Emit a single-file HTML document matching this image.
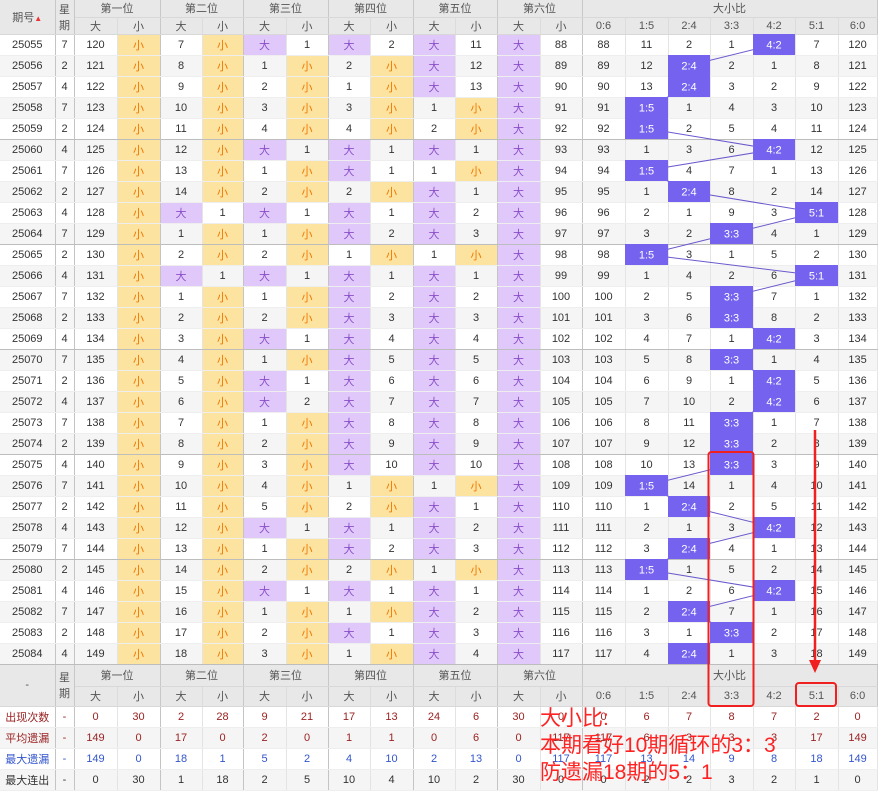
<!DOCTYPE html>
<html><head><meta charset="utf-8"><style>
*{margin:0;padding:0;box-sizing:border-box}
body{width:880px;height:792px;background:#fff;font-family:"Liberation Sans","Noto Sans CJK SC",sans-serif;font-size:11px;color:#333;position:relative;overflow:hidden}
table{border-collapse:collapse;table-layout:fixed;width:877px;position:absolute;left:0;top:0}
td{text-align:center;height:21px;border-right:1px solid #e4e4e4;border-bottom:1px solid #eee;padding:0;white-space:nowrap;overflow:hidden}
tr.d:nth-child(even) td{background:#f5f5f5}
tr.d td:nth-child(1),tr.d td:nth-child(2),tr.d td:nth-child(4),tr.d td:nth-child(6),tr.d td:nth-child(8),tr.d td:nth-child(10),tr.d td:nth-child(12),tr.d td:nth-child(14){border-right:1px solid #c4c4c4}
tr.g td{border-bottom:1px solid #bdbdbd}
th{background:#e8e8e8;font-weight:normal;color:#555;border-right:1px solid #c8c8c8;border-bottom:1px solid #d8d8d8;font-size:11px}
th.s{border-right:1px solid #dcdcdc}
tr.d td.o{background:#fde3a0 !important;color:#f07800}
tr.d td.p{background:#e0c8fb !important;color:#8a4fc8}
tr.d td.h{background:#7563f0 !important;color:#fff}
.r1 td{color:#9b2222}.r2 td{color:#9b2222}.r3 td{color:#3355cc}.r4 td{color:#333}
</style></head><body>
<table>
<colgroup><col style="width:55px"><col style="width:19px"><col style="width:43px"><col style="width:43px"><col style="width:42px"><col style="width:41px"><col style="width:43px"><col style="width:42px"><col style="width:42px"><col style="width:43px"><col style="width:42px"><col style="width:42px"><col style="width:43px"><col style="width:42px"><col style="width:43px"><col style="width:43px"><col style="width:42px"><col style="width:43px"><col style="width:42px"><col style="width:43px"><col style="width:39px"></colgroup>
<tr style="height:17px"><th rowspan="2">期号<span style="color:#e33;font-size:8px">▲</span></th><th rowspan="2">星<br>期</th><th colspan="2">第一位</th><th colspan="2">第二位</th><th colspan="2">第三位</th><th colspan="2">第四位</th><th colspan="2">第五位</th><th colspan="2">第六位</th><th colspan="7">大小比</th></tr>
<tr style="height:17px"><th class="s">大</th><th>小</th><th class="s">大</th><th>小</th><th class="s">大</th><th>小</th><th class="s">大</th><th>小</th><th class="s">大</th><th>小</th><th class="s">大</th><th>小</th><th class="s">0:6</th><th class="s">1:5</th><th class="s">2:4</th><th class="s">3:3</th><th class="s">4:2</th><th class="s">5:1</th><th>6:0</th></tr>
<tr class="d"><td>25055</td><td>7</td><td>120</td><td class="o">小</td><td>7</td><td class="o">小</td><td class="p">大</td><td>1</td><td class="p">大</td><td>2</td><td class="p">大</td><td>11</td><td class="p">大</td><td>88</td><td>88</td><td>11</td><td>2</td><td>1</td><td class="h">4:2</td><td>7</td><td>120</td></tr>
<tr class="d"><td>25056</td><td>2</td><td>121</td><td class="o">小</td><td>8</td><td class="o">小</td><td>1</td><td class="o">小</td><td>2</td><td class="o">小</td><td class="p">大</td><td>12</td><td class="p">大</td><td>89</td><td>89</td><td>12</td><td class="h">2:4</td><td>2</td><td>1</td><td>8</td><td>121</td></tr>
<tr class="d"><td>25057</td><td>4</td><td>122</td><td class="o">小</td><td>9</td><td class="o">小</td><td>2</td><td class="o">小</td><td>1</td><td class="o">小</td><td class="p">大</td><td>13</td><td class="p">大</td><td>90</td><td>90</td><td>13</td><td class="h">2:4</td><td>3</td><td>2</td><td>9</td><td>122</td></tr>
<tr class="d"><td>25058</td><td>7</td><td>123</td><td class="o">小</td><td>10</td><td class="o">小</td><td>3</td><td class="o">小</td><td>3</td><td class="o">小</td><td>1</td><td class="o">小</td><td class="p">大</td><td>91</td><td>91</td><td class="h">1:5</td><td>1</td><td>4</td><td>3</td><td>10</td><td>123</td></tr>
<tr class="d g"><td>25059</td><td>2</td><td>124</td><td class="o">小</td><td>11</td><td class="o">小</td><td>4</td><td class="o">小</td><td>4</td><td class="o">小</td><td>2</td><td class="o">小</td><td class="p">大</td><td>92</td><td>92</td><td class="h">1:5</td><td>2</td><td>5</td><td>4</td><td>11</td><td>124</td></tr>
<tr class="d"><td>25060</td><td>4</td><td>125</td><td class="o">小</td><td>12</td><td class="o">小</td><td class="p">大</td><td>1</td><td class="p">大</td><td>1</td><td class="p">大</td><td>1</td><td class="p">大</td><td>93</td><td>93</td><td>1</td><td>3</td><td>6</td><td class="h">4:2</td><td>12</td><td>125</td></tr>
<tr class="d"><td>25061</td><td>7</td><td>126</td><td class="o">小</td><td>13</td><td class="o">小</td><td>1</td><td class="o">小</td><td class="p">大</td><td>1</td><td>1</td><td class="o">小</td><td class="p">大</td><td>94</td><td>94</td><td class="h">1:5</td><td>4</td><td>7</td><td>1</td><td>13</td><td>126</td></tr>
<tr class="d"><td>25062</td><td>2</td><td>127</td><td class="o">小</td><td>14</td><td class="o">小</td><td>2</td><td class="o">小</td><td>2</td><td class="o">小</td><td class="p">大</td><td>1</td><td class="p">大</td><td>95</td><td>95</td><td>1</td><td class="h">2:4</td><td>8</td><td>2</td><td>14</td><td>127</td></tr>
<tr class="d"><td>25063</td><td>4</td><td>128</td><td class="o">小</td><td class="p">大</td><td>1</td><td class="p">大</td><td>1</td><td class="p">大</td><td>1</td><td class="p">大</td><td>2</td><td class="p">大</td><td>96</td><td>96</td><td>2</td><td>1</td><td>9</td><td>3</td><td class="h">5:1</td><td>128</td></tr>
<tr class="d g"><td>25064</td><td>7</td><td>129</td><td class="o">小</td><td>1</td><td class="o">小</td><td>1</td><td class="o">小</td><td class="p">大</td><td>2</td><td class="p">大</td><td>3</td><td class="p">大</td><td>97</td><td>97</td><td>3</td><td>2</td><td class="h">3:3</td><td>4</td><td>1</td><td>129</td></tr>
<tr class="d"><td>25065</td><td>2</td><td>130</td><td class="o">小</td><td>2</td><td class="o">小</td><td>2</td><td class="o">小</td><td>1</td><td class="o">小</td><td>1</td><td class="o">小</td><td class="p">大</td><td>98</td><td>98</td><td class="h">1:5</td><td>3</td><td>1</td><td>5</td><td>2</td><td>130</td></tr>
<tr class="d"><td>25066</td><td>4</td><td>131</td><td class="o">小</td><td class="p">大</td><td>1</td><td class="p">大</td><td>1</td><td class="p">大</td><td>1</td><td class="p">大</td><td>1</td><td class="p">大</td><td>99</td><td>99</td><td>1</td><td>4</td><td>2</td><td>6</td><td class="h">5:1</td><td>131</td></tr>
<tr class="d"><td>25067</td><td>7</td><td>132</td><td class="o">小</td><td>1</td><td class="o">小</td><td>1</td><td class="o">小</td><td class="p">大</td><td>2</td><td class="p">大</td><td>2</td><td class="p">大</td><td>100</td><td>100</td><td>2</td><td>5</td><td class="h">3:3</td><td>7</td><td>1</td><td>132</td></tr>
<tr class="d"><td>25068</td><td>2</td><td>133</td><td class="o">小</td><td>2</td><td class="o">小</td><td>2</td><td class="o">小</td><td class="p">大</td><td>3</td><td class="p">大</td><td>3</td><td class="p">大</td><td>101</td><td>101</td><td>3</td><td>6</td><td class="h">3:3</td><td>8</td><td>2</td><td>133</td></tr>
<tr class="d g"><td>25069</td><td>4</td><td>134</td><td class="o">小</td><td>3</td><td class="o">小</td><td class="p">大</td><td>1</td><td class="p">大</td><td>4</td><td class="p">大</td><td>4</td><td class="p">大</td><td>102</td><td>102</td><td>4</td><td>7</td><td>1</td><td class="h">4:2</td><td>3</td><td>134</td></tr>
<tr class="d"><td>25070</td><td>7</td><td>135</td><td class="o">小</td><td>4</td><td class="o">小</td><td>1</td><td class="o">小</td><td class="p">大</td><td>5</td><td class="p">大</td><td>5</td><td class="p">大</td><td>103</td><td>103</td><td>5</td><td>8</td><td class="h">3:3</td><td>1</td><td>4</td><td>135</td></tr>
<tr class="d"><td>25071</td><td>2</td><td>136</td><td class="o">小</td><td>5</td><td class="o">小</td><td class="p">大</td><td>1</td><td class="p">大</td><td>6</td><td class="p">大</td><td>6</td><td class="p">大</td><td>104</td><td>104</td><td>6</td><td>9</td><td>1</td><td class="h">4:2</td><td>5</td><td>136</td></tr>
<tr class="d"><td>25072</td><td>4</td><td>137</td><td class="o">小</td><td>6</td><td class="o">小</td><td class="p">大</td><td>2</td><td class="p">大</td><td>7</td><td class="p">大</td><td>7</td><td class="p">大</td><td>105</td><td>105</td><td>7</td><td>10</td><td>2</td><td class="h">4:2</td><td>6</td><td>137</td></tr>
<tr class="d"><td>25073</td><td>7</td><td>138</td><td class="o">小</td><td>7</td><td class="o">小</td><td>1</td><td class="o">小</td><td class="p">大</td><td>8</td><td class="p">大</td><td>8</td><td class="p">大</td><td>106</td><td>106</td><td>8</td><td>11</td><td class="h">3:3</td><td>1</td><td>7</td><td>138</td></tr>
<tr class="d g"><td>25074</td><td>2</td><td>139</td><td class="o">小</td><td>8</td><td class="o">小</td><td>2</td><td class="o">小</td><td class="p">大</td><td>9</td><td class="p">大</td><td>9</td><td class="p">大</td><td>107</td><td>107</td><td>9</td><td>12</td><td class="h">3:3</td><td>2</td><td>8</td><td>139</td></tr>
<tr class="d"><td>25075</td><td>4</td><td>140</td><td class="o">小</td><td>9</td><td class="o">小</td><td>3</td><td class="o">小</td><td class="p">大</td><td>10</td><td class="p">大</td><td>10</td><td class="p">大</td><td>108</td><td>108</td><td>10</td><td>13</td><td class="h">3:3</td><td>3</td><td>9</td><td>140</td></tr>
<tr class="d"><td>25076</td><td>7</td><td>141</td><td class="o">小</td><td>10</td><td class="o">小</td><td>4</td><td class="o">小</td><td>1</td><td class="o">小</td><td>1</td><td class="o">小</td><td class="p">大</td><td>109</td><td>109</td><td class="h">1:5</td><td>14</td><td>1</td><td>4</td><td>10</td><td>141</td></tr>
<tr class="d"><td>25077</td><td>2</td><td>142</td><td class="o">小</td><td>11</td><td class="o">小</td><td>5</td><td class="o">小</td><td>2</td><td class="o">小</td><td class="p">大</td><td>1</td><td class="p">大</td><td>110</td><td>110</td><td>1</td><td class="h">2:4</td><td>2</td><td>5</td><td>11</td><td>142</td></tr>
<tr class="d"><td>25078</td><td>4</td><td>143</td><td class="o">小</td><td>12</td><td class="o">小</td><td class="p">大</td><td>1</td><td class="p">大</td><td>1</td><td class="p">大</td><td>2</td><td class="p">大</td><td>111</td><td>111</td><td>2</td><td>1</td><td>3</td><td class="h">4:2</td><td>12</td><td>143</td></tr>
<tr class="d g"><td>25079</td><td>7</td><td>144</td><td class="o">小</td><td>13</td><td class="o">小</td><td>1</td><td class="o">小</td><td class="p">大</td><td>2</td><td class="p">大</td><td>3</td><td class="p">大</td><td>112</td><td>112</td><td>3</td><td class="h">2:4</td><td>4</td><td>1</td><td>13</td><td>144</td></tr>
<tr class="d"><td>25080</td><td>2</td><td>145</td><td class="o">小</td><td>14</td><td class="o">小</td><td>2</td><td class="o">小</td><td>2</td><td class="o">小</td><td>1</td><td class="o">小</td><td class="p">大</td><td>113</td><td>113</td><td class="h">1:5</td><td>1</td><td>5</td><td>2</td><td>14</td><td>145</td></tr>
<tr class="d"><td>25081</td><td>4</td><td>146</td><td class="o">小</td><td>15</td><td class="o">小</td><td class="p">大</td><td>1</td><td class="p">大</td><td>1</td><td class="p">大</td><td>1</td><td class="p">大</td><td>114</td><td>114</td><td>1</td><td>2</td><td>6</td><td class="h">4:2</td><td>15</td><td>146</td></tr>
<tr class="d"><td>25082</td><td>7</td><td>147</td><td class="o">小</td><td>16</td><td class="o">小</td><td>1</td><td class="o">小</td><td>1</td><td class="o">小</td><td class="p">大</td><td>2</td><td class="p">大</td><td>115</td><td>115</td><td>2</td><td class="h">2:4</td><td>7</td><td>1</td><td>16</td><td>147</td></tr>
<tr class="d"><td>25083</td><td>2</td><td>148</td><td class="o">小</td><td>17</td><td class="o">小</td><td>2</td><td class="o">小</td><td class="p">大</td><td>1</td><td class="p">大</td><td>3</td><td class="p">大</td><td>116</td><td>116</td><td>3</td><td>1</td><td class="h">3:3</td><td>2</td><td>17</td><td>148</td></tr>
<tr class="d g"><td>25084</td><td>4</td><td>149</td><td class="o">小</td><td>18</td><td class="o">小</td><td>3</td><td class="o">小</td><td>1</td><td class="o">小</td><td class="p">大</td><td>4</td><td class="p">大</td><td>117</td><td>117</td><td>4</td><td class="h">2:4</td><td>1</td><td>3</td><td>18</td><td>149</td></tr>
<tr style="height:22px"><th rowspan="2">-</th><th rowspan="2">星<br>期</th><th colspan="2">第一位</th><th colspan="2">第二位</th><th colspan="2">第三位</th><th colspan="2">第四位</th><th colspan="2">第五位</th><th colspan="2">第六位</th><th colspan="7">大小比</th></tr>
<tr style="height:20px"><th class="s">大</th><th>小</th><th class="s">大</th><th>小</th><th class="s">大</th><th>小</th><th class="s">大</th><th>小</th><th class="s">大</th><th>小</th><th class="s">大</th><th>小</th><th class="s">0:6</th><th class="s">1:5</th><th class="s">2:4</th><th class="s">3:3</th><th class="s">4:2</th><th class="s">5:1</th><th>6:0</th></tr>
<tr class="d r1"><td>出现次数</td><td>-</td><td>0</td><td>30</td><td>2</td><td>28</td><td>9</td><td>21</td><td>17</td><td>13</td><td>24</td><td>6</td><td>30</td><td>0</td><td>0</td><td>6</td><td>7</td><td>8</td><td>7</td><td>2</td><td>0</td></tr>
<tr class="d r2"><td>平均遗漏</td><td>-</td><td>149</td><td>0</td><td>17</td><td>0</td><td>2</td><td>0</td><td>1</td><td>1</td><td>0</td><td>6</td><td>0</td><td>117</td><td>117</td><td>6</td><td>3</td><td>3</td><td>3</td><td>17</td><td>149</td></tr>
<tr class="d r3"><td>最大遗漏</td><td>-</td><td>149</td><td>0</td><td>18</td><td>1</td><td>5</td><td>2</td><td>4</td><td>10</td><td>2</td><td>13</td><td>0</td><td>117</td><td>117</td><td>13</td><td>14</td><td>9</td><td>8</td><td>18</td><td>149</td></tr>
<tr class="d r4"><td>最大连出</td><td>-</td><td>0</td><td>30</td><td>1</td><td>18</td><td>2</td><td>5</td><td>10</td><td>4</td><td>10</td><td>2</td><td>30</td><td>0</td><td>0</td><td>2</td><td>2</td><td>3</td><td>2</td><td>1</td><td>0</td></tr>
</table>
<svg width="880" height="792" style="position:absolute;left:0;top:0" xmlns="http://www.w3.org/2000/svg" font-family="Liberation Sans, sans-serif" font-size="11" text-anchor="middle">
<polyline fill="none" stroke="#6a5acd" stroke-width="1" points="774,44.5 689,65.5 689,86.5 646.5,107.5 646.5,128.5 774,149.5 646.5,170.5 689,191.5 816.5,212.5 731.5,233.5 646.5,254.5 816.5,275.5 731.5,296.5 731.5,317.5 774,338.5 731.5,359.5 774,380.5 774,401.5 731.5,422.5 731.5,443.5 731.5,464.5 646.5,485.5 689,506.5 774,527.5 689,548.5 646.5,569.5 774,590.5 689,611.5 731.5,632.5 689,653.5"/>
<g fill="#7563f0">
<rect x="753" y="34" width="42" height="21"/><rect x="668" y="55" width="42" height="21"/><rect x="668" y="76" width="42" height="21"/><rect x="625" y="97" width="43" height="21"/><rect x="625" y="118" width="43" height="21"/>
<rect x="753" y="139" width="42" height="21"/><rect x="625" y="160" width="43" height="21"/><rect x="668" y="181" width="42" height="21"/><rect x="795" y="202" width="43" height="21"/><rect x="710" y="223" width="43" height="21"/>
<rect x="625" y="244" width="43" height="21"/><rect x="795" y="265" width="43" height="21"/><rect x="710" y="286" width="43" height="21"/><rect x="710" y="307" width="43" height="21"/><rect x="753" y="328" width="42" height="21"/>
<rect x="710" y="349" width="43" height="21"/><rect x="753" y="370" width="42" height="21"/><rect x="753" y="391" width="42" height="21"/><rect x="710" y="412" width="43" height="21"/><rect x="710" y="433" width="43" height="21"/>
<rect x="710" y="454" width="43" height="21"/><rect x="625" y="475" width="43" height="21"/><rect x="668" y="496" width="42" height="21"/><rect x="753" y="517" width="42" height="21"/><rect x="668" y="538" width="42" height="21"/>
<rect x="625" y="559" width="43" height="21"/><rect x="753" y="580" width="42" height="21"/><rect x="668" y="601" width="42" height="21"/><rect x="710" y="622" width="43" height="21"/><rect x="668" y="643" width="42" height="21"/>
</g>
<g fill="#fff">
<text x="774" y="48.5">4:2</text><text x="689" y="69.5">2:4</text><text x="689" y="90.5">2:4</text><text x="646.5" y="111.5">1:5</text><text x="646.5" y="132.5">1:5</text>
<text x="774" y="153.5">4:2</text><text x="646.5" y="174.5">1:5</text><text x="689" y="195.5">2:4</text><text x="816.5" y="216.5">5:1</text><text x="731.5" y="237.5">3:3</text>
<text x="646.5" y="258.5">1:5</text><text x="816.5" y="279.5">5:1</text><text x="731.5" y="300.5">3:3</text><text x="731.5" y="321.5">3:3</text><text x="774" y="342.5">4:2</text>
<text x="731.5" y="363.5">3:3</text><text x="774" y="384.5">4:2</text><text x="774" y="405.5">4:2</text><text x="731.5" y="426.5">3:3</text><text x="731.5" y="447.5">3:3</text>
<text x="731.5" y="468.5">3:3</text><text x="646.5" y="489.5">1:5</text><text x="689" y="510.5">2:4</text><text x="774" y="531.5">4:2</text><text x="689" y="552.5">2:4</text>
<text x="646.5" y="573.5">1:5</text><text x="774" y="594.5">4:2</text><text x="689" y="615.5">2:4</text><text x="731.5" y="636.5">3:3</text><text x="689" y="657.5">2:4</text>
</g>
<rect x="708.5" y="452" width="45" height="254" rx="3" fill="none" stroke="#f02020" stroke-width="2"/>
<rect x="796" y="683" width="40" height="23" rx="3" fill="none" stroke="#f02020" stroke-width="2"/>
<line x1="815" y1="430" x2="815" y2="662" stroke="#f02020" stroke-width="2.5"/>
<polygon points="809,660 821,660 815,673" fill="#f02020"/>
</svg>
<div style="position:absolute;left:540px;top:705px;font-size:21px;line-height:27px;color:#f22;white-space:nowrap">大小比:<br>本期看好10期循环的3：3<br>防遗漏18期的5：1</div>
</body></html>
